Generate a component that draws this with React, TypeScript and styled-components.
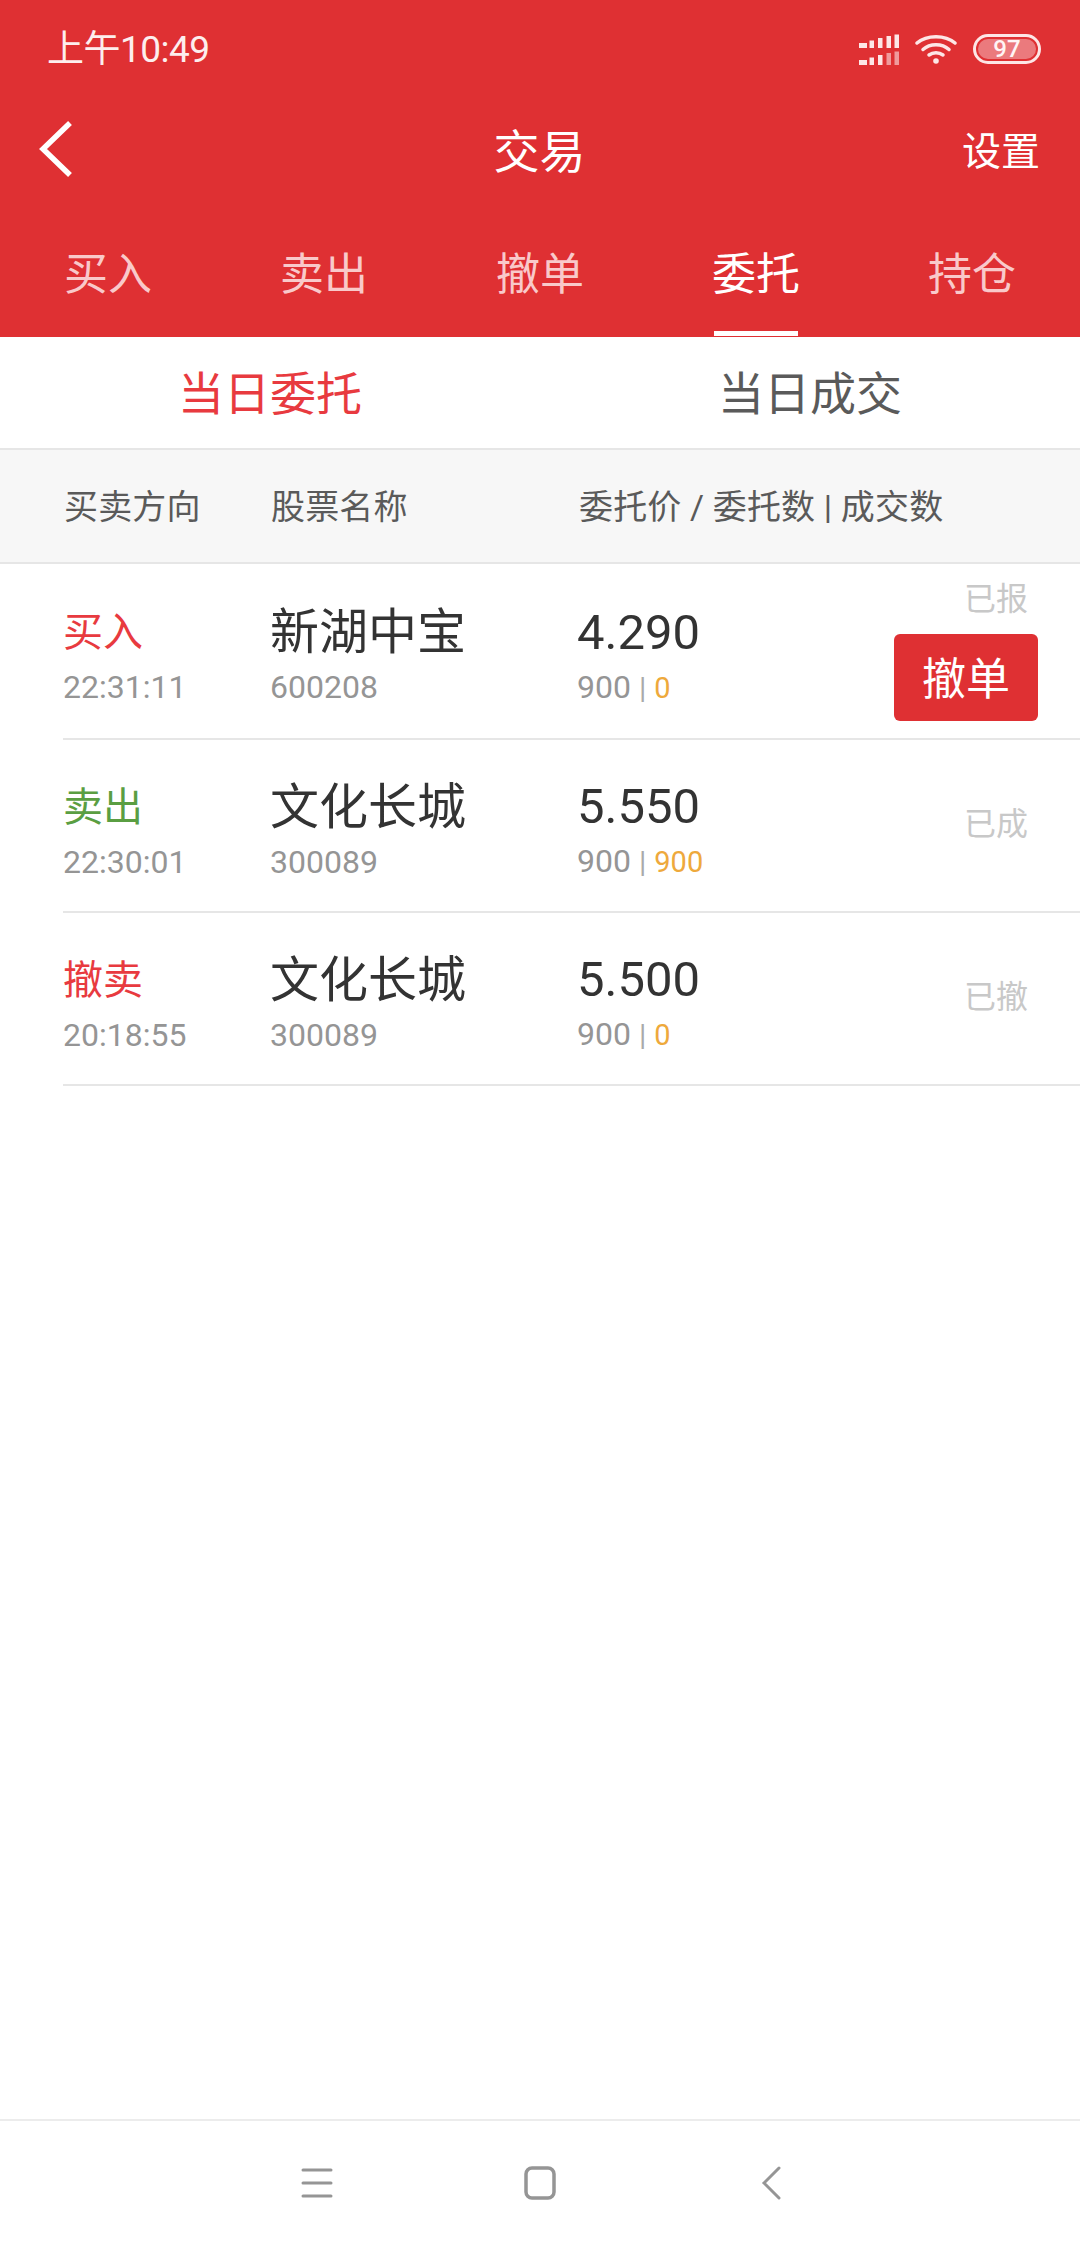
import styled, { createGlobalStyle } from "styled-components";

const GlobalStyle = createGlobalStyle`
  html, body {
    margin: 0;
    padding: 0;
    background: #ffffff;
    font-family: Roboto, "Noto Sans CJK SC", sans-serif;
  }
`;

const Page = styled.div`
  width: 1080px;
  height: 2248px;
  display: flex;
  flex-direction: column;
  overflow: hidden;
  background: #ffffff;
`;

const Header = styled.header`
  background: #df3033;
  color: #ffffff;
  flex: none;
`;

const StatusBar = styled.div`
  height: 98px;
  padding: 0 39px 0 47px;
  display: flex;
  align-items: center;
  justify-content: space-between;
`;

const Clock = styled.span`
  font-size: 37px;
  line-height: 98px;
  letter-spacing: -0.5px;
  padding-top: 2px;
  color: #fdeeee;
`;

const StatusIcons = styled.div`
  display: flex;
  align-items: center;
  gap: 16px;
`;

const Battery = styled.div`
  width: 68px;
  height: 30px;
  box-sizing: border-box;
  border: 3px solid #fde6e6;
  border-radius: 15px;
  padding: 2px;
  display: flex;
`;

const BatteryFill = styled.div`
  flex: 1;
  border-radius: 10px;
  background: #eb7a7d;
  color: #fff5f5;
  font-size: 24px;
  font-weight: 500;
  line-height: 20px;
  text-align: center;
`;

const NavBar = styled.div`
  height: 102px;
  padding: 0 40px 0 39px;
  display: grid;
  grid-template-columns: 1fr auto 1fr;
  align-items: center;
`;

const BackButton = styled.div`
  display: flex;
  align-items: center;
`;

const Title = styled.div`
  font-size: 46px;
  line-height: 60px;
  padding-top: 5px;
`;

const SettingLink = styled.div`
  font-size: 39px;
  line-height: 50px;
  padding-top: 5px;
  text-align: right;
`;

const Tabs = styled.div`
  height: 137px;
  display: grid;
  grid-template-columns: repeat(5, 216px);
`;

const Tab = styled.div<{ $active?: boolean }>`
  position: relative;
  text-align: center;
  font-size: 44px;
  line-height: 60px;
  padding-top: 45px;
  color: ${({ $active }) => ($active ? "#ffffff" : "#f9c9ca")};

  &::after {
    content: "";
    display: ${({ $active }) => ($active ? "block" : "none")};
    position: absolute;
    left: 66px;
    bottom: 1px;
    width: 84px;
    height: 5px;
    background: #ffffff;
  }
`;

const SubTabs = styled.div`
  flex: none;
  height: 113px;
  padding-top: 3px;
  display: grid;
  grid-template-columns: 1fr 1fr;
  align-items: center;
  border-bottom: 2px solid #e6e6e6;
  box-sizing: border-box;
`;

const SubTab = styled.div<{ $active?: boolean }>`
  text-align: center;
  font-size: 46px;
  line-height: 60px;
  color: ${({ $active }) => ($active ? "#e83a3f" : "#5a5a5a")};
`;

const TableHead = styled.div`
  flex: none;
  height: 114px;
  box-sizing: border-box;
  padding: 0 0 4px 64px;
  display: grid;
  grid-template-columns: 207px 308px 1fr;
  align-items: center;
  background: #f7f7f7;
  border-bottom: 2px solid #e6e6e6;
  font-size: 34px;
  letter-spacing: 0.15px;
  color: #5a5a5a;
`;

const List = styled.div`
  flex: 1;
`;

const Row = styled.div`
  height: 173px;
  box-sizing: border-box;
  margin-left: 63px;
  padding-right: 42px;
  display: grid;
  grid-template-columns: 207px 307px 1fr auto;
  align-items: center;
  border-bottom: 2px solid #e6e6e6;

  &:first-child {
    height: 176px;
  }
`;

const Cell = styled.div`
  display: flex;
  flex-direction: column;
  gap: 4px;
  padding-top: 12px;
`;

const Direction = styled.div<{ $color: string }>`
  font-size: 40px;
  line-height: 56px;
  color: ${({ $color }) => $color};
`;

const Time = styled.div`
  font-size: 32px;
  line-height: 44px;
  color: #959595;
`;

const StockName = styled.div`
  font-size: 49px;
  line-height: 56px;
  color: #333333;
`;

const Price = styled.div`
  font-size: 49px;
  line-height: 56px;
  color: #333333;
`;

const Counts = styled.div`
  font-size: 32px;
  line-height: 44px;
  color: #959595;
`;

const Divider = styled.span`
  font-size: 30px;
  margin: 0 8px;
  color: #aaaaaa;
`;

const Filled = styled.span`
  color: #eea93c;
  font-size: 29px;
`;

const Side = styled.div`
  display: flex;
  flex-direction: column;
  align-items: flex-end;
  gap: 15px;
  padding-bottom: 3px;
`;

const StatusText = styled.div`
  font-size: 32px;
  line-height: 40px;
  margin-right: 10px;
  color: #c8c8c8;
`;

const CancelButton = styled.button`
  width: 144px;
  height: 87px;
  padding: 0 0 3px;
  border: none;
  border-radius: 6px;
  background: #df3033;
  color: #ffffff;
  font-family: inherit;
  font-size: 44px;
`;

const BottomBar = styled.div`
  flex: none;
  height: 129px;
  box-sizing: border-box;
  border-top: 2px solid #ececec;
  display: grid;
  grid-template-columns: 317px 223px 225px;
  justify-content: start;
`;

const BarSlot = styled.div`
  display: flex;
  align-items: center;
  justify-content: flex-end;
  transform: translate(16px, -2px);
`;

const orders = [
  { dir: "买入", color: "#e83a3f", time: "22:31:11", name: "新湖中宝", code: "600208", price: "4.290", qty: "900", done: "0", status: "已报", cancel: true },
  { dir: "卖出", color: "#5a9e42", time: "22:30:01", name: "文化长城", code: "300089", price: "5.550", qty: "900", done: "900", status: "已成" },
  { dir: "撤卖", color: "#e83a3f", time: "20:18:55", name: "文化长城", code: "300089", price: "5.500", qty: "900", done: "0", status: "已撤" },
];

const SignalIcon = () => {
  const xs = [0, 10.5, 19, 27.5, 35.5];
  const hs = [5, 7.5, 10, 12, 13.5];
  return (
    <svg width="40" height="31" viewBox="0 0 40 31">
      {xs.map((x, i) => (
        <rect key={i} x={x} y={14 - hs[i]} width={i === 0 ? 8 : 4.5} height={hs[i]} fill="#fde6e6" />
      ))}
      {xs.map((x, i) => (
        <rect key={i} x={x} y={31 - hs[i]} width={i === 0 ? 8 : 4.5} height={hs[i]} fill={i > 2 ? "#f09a9c" : "#fde6e6"} />
      ))}
    </svg>
  );
};

const WifiIcon = () => (
  <svg width="42" height="30" viewBox="0 0 42 30" fill="none" stroke="#fde6e6" strokeWidth="3.500" strokeLinecap="round">
    <path d="M2 9 C12 0.500 30 0.500 40 9" />
    <path d="M8 15.500 C15 9 27 9 34 15.500" />
    <path d="M14 21 C18 18 24 18 28 21" />
    <circle cx="21" cy="27" r="2.800" fill="#fde6e6" stroke="none" />
  </svg>
);

const App = () => {
  return (
    <Page>
      <GlobalStyle />
      <Header>
        <StatusBar>
          <Clock>上午10:49</Clock>
          <StatusIcons>
            <SignalIcon />
            <WifiIcon />
            <Battery>
              <BatteryFill>97</BatteryFill>
            </Battery>
          </StatusIcons>
        </StatusBar>
        <NavBar>
          <BackButton>
            <svg width="34" height="56" viewBox="0 0 34 56" fill="none" stroke="#ffffff" strokeWidth="5.500">
              <path d="M31 2 L4 28 L31 54" />
            </svg>
          </BackButton>
          <Title>交易</Title>
          <SettingLink>设置</SettingLink>
        </NavBar>
        <Tabs>
          <Tab>买入</Tab>
          <Tab>卖出</Tab>
          <Tab>撤单</Tab>
          <Tab $active>委托</Tab>
          <Tab>持仓</Tab>
        </Tabs>
      </Header>
      <SubTabs>
        <SubTab $active>当日委托</SubTab>
        <SubTab>当日成交</SubTab>
      </SubTabs>
      <TableHead>
        <div>买卖方向</div>
        <div>股票名称</div>
        <div>委托价 / 委托数 | 成交数</div>
      </TableHead>
      <List>
        {orders.map((o) => (
          <Row key={o.time}>
            <Cell>
              <Direction $color={o.color}>{o.dir}</Direction>
              <Time>{o.time}</Time>
            </Cell>
            <Cell>
              <StockName>{o.name}</StockName>
              <Time>{o.code}</Time>
            </Cell>
            <Cell>
              <Price>{o.price}</Price>
              <Counts>
                {o.qty}
                <Divider>|</Divider>
                <Filled>{o.done}</Filled>
              </Counts>
            </Cell>
            <Side>
              <StatusText>{o.status}</StatusText>
              {o.cancel && <CancelButton>撤单</CancelButton>}
            </Side>
          </Row>
        ))}
      </List>
      <BottomBar>
        <BarSlot>
          <svg width="32" height="32" viewBox="0 0 32 32" stroke="#959595" strokeWidth="3" strokeLinecap="round">
            <path d="M2 3 H30 M2 16 H30 M2 29 H30" />
          </svg>
        </BarSlot>
        <BarSlot>
          <svg width="32" height="34" viewBox="0 0 32 34" fill="none" stroke="#959595" strokeWidth="3.500">
            <rect x="2" y="2" width="28" height="30" rx="6" />
          </svg>
        </BarSlot>
        <BarSlot>
          <svg width="20" height="34" viewBox="0 0 20 34" fill="none" stroke="#959595" strokeWidth="3" strokeLinecap="round">
            <path d="M18 2 L3 17 L18 32" />
          </svg>
        </BarSlot>
      </BottomBar>
    </Page>
  );
};

export default App;
